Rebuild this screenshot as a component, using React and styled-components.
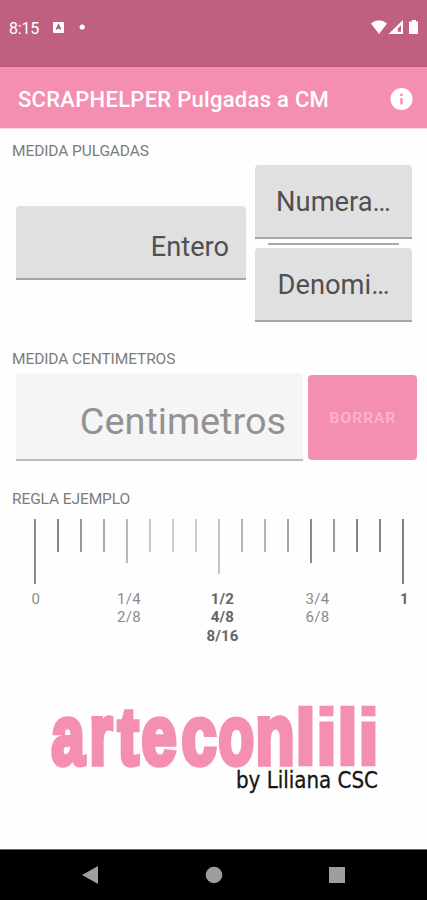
import React from 'react';
import styled, { createGlobalStyle } from 'styled-components';

const GlobalStyle = createGlobalStyle`
  * { box-sizing: border-box; }
  body { margin: 0; background: #fff; font-family: Roboto, sans-serif; }
`;

const Screen = styled.div`
  width: 427px;
  height: 900px;
  display: flex;
  flex-direction: column;
  overflow: hidden;
  background: #fefefe;
`;

const StatusBar = styled.header`
  height: 67px;
  flex: none;
  display: flex;
  align-items: flex-start;
  justify-content: space-between;
  padding: 18px 7px 0 9px;
  background: #c06081;
  border-bottom: 1px solid #b95b7c;
  color: #fff;
`;

const StatusGroup = styled.div`
  display: flex;
  align-items: center;
  height: 19px;
`;

const Clock = styled.span`
  width: 44px;
  font-size: 16px;
  line-height: 19px;
  letter-spacing: -0.2px;
  padding-top: 2px;
`;

const AppBar = styled.div`
  height: 61px;
  flex: none;
  display: flex;
  align-items: center;
  justify-content: space-between;
  padding: 3px 14px 0 18px;
  background: #f48fb1;
  box-shadow: 0 1px 1px #f3d9e2;
`;

const Title = styled.h1`
  margin: 0;
  font-size: 22px;
  font-weight: 500;
  line-height: 28px;
  letter-spacing: 0.28px;
  padding-top: 2px;
  color: #fff;
  white-space: nowrap;
`;

const Content = styled.main`
  flex: 1;
  display: flex;
  flex-direction: column;
`;

const SectionLabel = styled.h2`
  margin: ${p => p.$top}px 0 0 12px;
  height: 20px;
  font-size: 15.5px;
  font-weight: 400;
  line-height: 20px;
  letter-spacing: -0.1px;
  color: #7c7c7c;
`;

const InchRow = styled.section`
  display: flex;
  align-items: center;
  gap: 9px;
  margin-top: 4px;
  padding-left: 16px;
  height: 157px;
`;

const WholeNumber = styled.div`
  padding-bottom: 2px;
`;

const Fraction = styled.div`
  display: flex;
  flex-direction: column;
  align-items: center;
  width: 157px;
`;

const FractionLine = styled.div`
  width: 131px;
  height: 2px;
  margin: 4px 0 3px;
  background: #a9a9a9;
`;

const Field = styled.div`
  width: ${p => p.$width}px;
  height: ${p => p.$height}px;
  padding: ${p => p.$drop || 0}px 17px 0 ${p => (p.$center ? 17 : 0)}px;
  display: flex;
  align-items: center;
  justify-content: ${p => (p.$center ? 'center' : 'flex-end')};
  border-radius: 4px 4px 0 0;
  border-bottom: 2px solid ${p => (p.$disabled ? '#bcbcbc' : '#a6a6a6')};
  background: ${p => (p.$disabled ? '#f5f5f5' : '#e0e0e0')};
  color: ${p => (p.$disabled ? '#929292' : '#505050')};
  font-size: ${p => p.$size}px;
  line-height: 1.2;
  white-space: nowrap;
`;

const CentimeterRow = styled.section`
  display: flex;
  align-items: flex-start;
  gap: 5px;
  margin-top: 4px;
  padding-left: 16px;
  height: 88px;
`;

const ClearButton = styled.button`
  width: 109px;
  height: 85px;
  margin-top: 2px;
  padding: 0 0 0 1px;
  border: 0;
  border-radius: 4px;
  background: #f48fb1;
  color: #fab7ce;
  font: 500 15.5px Roboto, sans-serif;
  letter-spacing: 1.15px;
`;

const Ruler = styled.div`
  display: flex;
  justify-content: space-between;
  width: 370px;
  height: 65px;
  margin: 10px 0 0 34px;
`;

const Tick = styled.i`
  width: 2px;
  height: ${p => p.$length}px;
  background: ${p => p.$tone};
`;

const RulerLabels = styled.div`
  display: grid;
  grid-template-columns: 48px 138px 49px 141px 33px;
  margin-top: 6px;
  padding-left: 12px;
`;

const Mark = styled.div`
  font-size: 15px;
  line-height: 18.3px;
  letter-spacing: ${p => (p.$strong ? 0.2 : 0.4)}px;
  text-align: center;
  white-space: pre-line;
  color: ${p => (p.$strong ? '#666' : '#8b8b8b')};
  font-weight: ${p => (p.$strong ? 700 : 400)};
`;

const LogoArea = styled.div`
  margin: 53px 0 0 44px;
  height: 100px;
`;

const NavBar = styled.nav`
  height: 51px;
  flex: none;
  display: grid;
  grid-template-columns: 180px 68px 178px;
  align-items: center;
  justify-items: center;
  background: #000;
  border-top: 1px solid #666;
`;

const shades = ['#8c8c8c', '#858585', '#999', '#aaa', '#b9b9b9', '#c5c5c5', '#cecece', '#cacaca', '#c5c5c5', '#b4b4b4', '#b4b4b4', '#a5a5a5', '#8a8a8a', '#999', '#858585', '#858585', '#808080'];
const ticks = shades.map((tone, i) => ({
  tone,
  length: i % 16 === 0 ? 65 : i === 8 ? 55 : i % 4 === 0 ? 44 : 33,
}));

const marks = [
  { text: '0' },
  { text: '1/4\n2/8' },
  { text: '1/2\n4/8\n8/16', strong: true },
  { text: '3/4\n6/8' },
  { text: '1', strong: true },
];

// Wordmark letters: left edge, advance width, font size, outline weight.
const letters = [
  ['a', 7.5, 33, 83, 5.5], ['r', 45.5, 23, 85, 5.5], ['t', 74, 20.5, 79, 5.5],
  ['e', 97.5, 35, 83, 5.5], ['c', 137.5, 35, 83, 5.5], ['o', 174.5, 35.5, 83, 5.5],
  ['n', 211.5, 39, 85, 5.5], ['l', 250, 23, 79.5, 2.5], ['i', 271, 23, 79.5, 2.5],
  ['l', 292, 23, 79.5, 2.5], ['i', 313, 23, 79.5, 2.5],
];

function Logo() {
  return (
    <svg width="340" height="100" viewBox="0 0 340 100">
      <text fill="#f48fb1" stroke="#f48fb1" fontFamily="Liberation Sans" fontWeight="700">
        {letters.map(([char, x, width, size, weight]) => (
          <tspan key={x} x={x} y={68.7 - weight / 2} fontSize={size} strokeWidth={weight} textLength={width} lengthAdjust="spacingAndGlyphs">{char}</tspan>
        ))}
      </text>
      <text x="192" y="90" fontFamily="DejaVu Sans Condensed, DejaVu Sans, sans-serif" fontSize="23.5" fill="#151515" stroke="#151515" strokeWidth=".3" textLength="142" lengthAdjust="spacingAndGlyphs">by Liliana CSC</text>
    </svg>
  );
}

export default function App() {
  return (
    <>
      <GlobalStyle />
      <Screen>
        <StatusBar>
          <StatusGroup>
            <Clock>8:15</Clock>
            <svg width="40" height="19" viewBox="0 0 40 19">
              <rect x="0" y="4" width="11" height="11" rx="1" fill="#fff" />
              <path d="M3.3 11.5 5.5 7l2.2 4.5M4.2 10h2.6" fill="none" stroke="#a85572" strokeWidth="1.5" />
              <circle cx="29.2" cy="9" r="2.6" fill="#fff" />
            </svg>
          </StatusGroup>
          <StatusGroup>
            <svg width="50" height="19" viewBox="0 0 50 19">
              <path d="M1 5.5Q9 -.8 17 5.5L9 16Z" fill="#fff" />
              <path fillRule="evenodd" d="M33 2v14H18.5ZM31 7.2v6.6h-3.2v-3.2Z" fill="#fff" />
              <path d="M42 2h4v1.5h2V16h-9V3.5h3Z" fill="#fff" />
            </svg>
          </StatusGroup>
        </StatusBar>
        <AppBar>
          <Title>SCRAPHELPER Pulgadas a CM</Title>
          <svg width="23" height="23" viewBox="0 0 23 23">
            <circle cx="11.5" cy="11" r="11" fill="#fff" />
            <path d="M10.3 10h2.4v6.5h-2.4zM10.3 5.5h2.4v2.4h-2.4z" fill="#f48fb1" />
          </svg>
        </AppBar>
        <Content>
          <SectionLabel $top={13}>MEDIDA PULGADAS</SectionLabel>
          <InchRow>
            <WholeNumber>
              <Field $width={230} $height={74} $size={27.2} $drop={11}>Entero</Field>
            </WholeNumber>
            <Fraction>
              <Field $center $width={157} $height={74} $size={27.3} $drop={3}>Numera…</Field>
              <FractionLine />
              <Field $center $width={157} $height={74} $size={27.3} $drop={3}>Denomi…</Field>
            </Fraction>
          </InchRow>
          <SectionLabel $top={27}>MEDIDA CENTIMETROS</SectionLabel>
          <CentimeterRow>
            <Field $disabled $width={287} $height={88} $size={37.8} $drop={12}>Centimetros</Field>
            <ClearButton>BORRAR</ClearButton>
          </CentimeterRow>
          <SectionLabel $top={28}>REGLA EJEMPLO</SectionLabel>
          <Ruler>
            {ticks.map((tick, i) => <Tick key={i} $length={tick.length} $tone={tick.tone} />)}
          </Ruler>
          <RulerLabels>
            {marks.map(mark => <Mark key={mark.text} $strong={mark.strong}>{mark.text}</Mark>)}
          </RulerLabels>
          <LogoArea><Logo /></LogoArea>
        </Content>
        <NavBar>
          <svg width="18" height="20"><path d="M1 10 17 1v18Z" fill="#9e9e9e" /></svg>
          <svg width="18" height="18"><circle cx="9" cy="9" r="8.3" fill="#9e9e9e" /></svg>
          <svg width="18" height="18"><rect x="1" y="1" width="16" height="16" fill="#9e9e9e" /></svg>
        </NavBar>
      </Screen>
    </>
  );
}
